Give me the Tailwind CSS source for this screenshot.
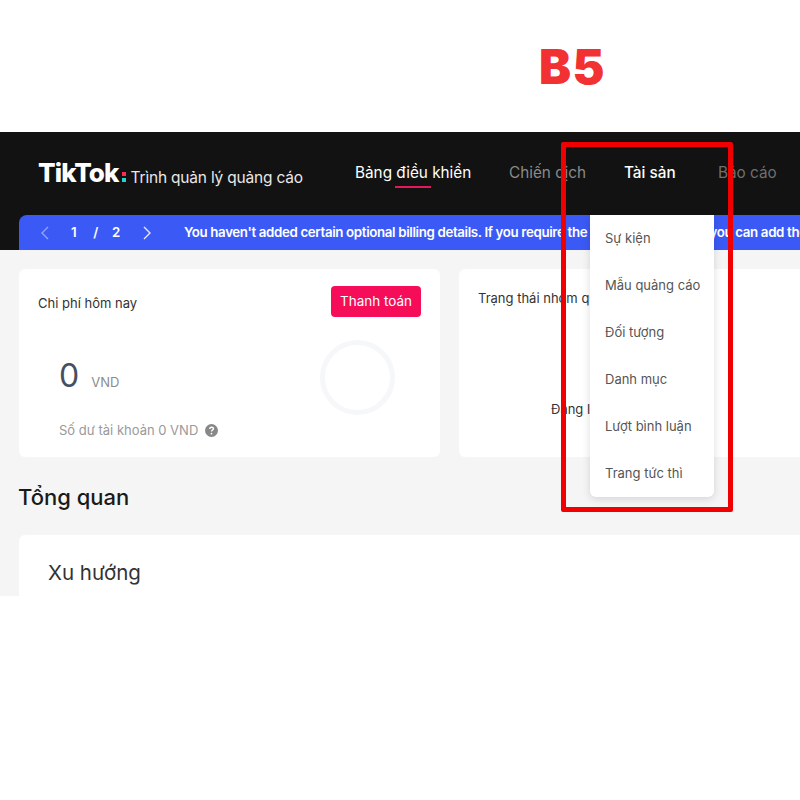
<!DOCTYPE html>
<html lang="vi">
<head>
  <meta charset="UTF-8" />
  <title>B5</title>
  <script src="https://cdn.jsdelivr.net/npm/@tailwindcss/browser@4"></script>
</head>
<body class="bg-white font-['Inter',sans-serif]">
  <div class="relative w-[800px] h-[800px] overflow-hidden">
    <!-- tieu de buoc -->
    <div class="h-[132px] pl-[539px] pt-[38px]">
      <div class="text-[48px] leading-[58px] font-black text-[#f23232] tracking-[1.5px]">B5</div>
    </div>

    <!-- header -->
    <div class="h-[118px] bg-[#121212] overflow-hidden">
      <div class="h-[83px] flex items-center text-[15.3px] pl-[38px]">
        <div class="flex items-baseline w-[317px]">
          <span class="text-[26px] font-extrabold text-white tracking-[-0.9px] -translate-y-px">TikTok</span>
          <span class="flex flex-col gap-[2px] ml-[3px] mr-[5px] -translate-y-[7px]">
            <span class="w-[4px] h-[4px] bg-[#fe2c55]"></span>
            <span class="w-[4px] h-[4px] bg-[#25d4d0]"></span>
          </span>
          <span class="text-[15.5px] text-[#e8e8e8] tracking-[-0.2px]">Trình quản lý quảng cáo</span>
        </div>
        <span class="w-[154px] text-white">Bảng điều khiển</span>
        <span class="w-[115px] text-[#8a8a8a]">Chiến dịch</span>
        <span class="w-[94px] text-white font-medium">Tài sản</span>
        <span class="text-[#6f6f6f]">Báo cáo</span>
      </div>
      <div class="ml-[19px] h-[35px] bg-[#3b5af5] rounded-tl-lg flex items-center text-white text-[13.3px] font-semibold tracking-[-0.35px] whitespace-nowrap">
        <svg class="ml-[21px] w-[10px] h-[14px] shrink-0" viewBox="0 0 10 14" fill="none" stroke="#8fa4fa" stroke-width="1.4"><path d="M8 1 2 7l6 6"/></svg>
        <span class="ml-[21px]">1</span>
        <span class="ml-[17px]">/</span>
        <span class="ml-[14px]">2</span>
        <svg class="ml-[22px] w-[10px] h-[14px] shrink-0" viewBox="0 0 10 14" fill="none" stroke="#e4e9ff" stroke-width="1.4"><path d="m2 1 6 6-6 6"/></svg>
        <span class="ml-[32px]">You haven't added certain optional billing details. If you require the info for the invoice, you can add them</span>
      </div>
    </div>

    <!-- noi dung -->
    <div class="h-[346px] bg-[#f5f5f5] overflow-hidden pt-[19px] pl-[19px]">
      <div class="flex gap-[19px] w-[900px]">
        <div class="relative w-[421px] h-[188px] bg-white rounded-md shrink-0">
          <div class="flex justify-between items-start pl-[19px] pr-[19px] pt-[17px]">
            <span class="text-[13px] text-[#333] mt-[8px]">Chi phí hôm nay</span>
            <button class="w-[90px] h-[31px] rounded bg-[#f50d5a] text-white text-[13.5px]">Thanh toán</button>
          </div>
          <div class="flex items-baseline pl-[40px] mt-[35px]">
            <span class="text-[32px] text-[#454f63]">0</span>
            <span class="ml-[12px] text-[13px] text-[#8c8c8c]">VND</span>
          </div>
          <div class="flex items-center pl-[40px] mt-[21px] text-[13px] text-[#999]">
            Số dư tài khoản 0 VND
            <svg class="ml-[7px] w-[13px] h-[13px]" viewBox="0 0 12 12"><circle cx="6" cy="6" r="6" fill="#888"/><path d="M4.3 4.6C4.4 3.6 5.1 3 6.1 3 7.1 3 7.8 3.6 7.8 4.4 7.8 5.6 6 5.6 6 7" fill="none" stroke="#fff" stroke-width="1.3"/><circle cx="6" cy="8.9" r=".8" fill="#fff"/></svg>
          </div>
          <!-- vong tron bieu do -->
          <div class="absolute left-[301px] top-[71px] w-[75px] h-[75px] rounded-full border-[5px] border-[#f5f7f9]"></div>
        </div>
        <div class="w-[421px] h-[188px] bg-white rounded-md shrink-0">
          <div class="pl-[19px] pt-[20px] text-[13px] text-[#333]">Trạng thái nhóm quảng cáo</div>
          <div class="pl-[92px] mt-[91px] text-[13px] text-[#333]">Đang load</div>
        </div>
      </div>
      <h2 class="mt-[26px] -ml-px text-[22px] leading-[28px] font-medium text-[#1a1a1a]">Tổng quan</h2>
      <div class="mt-[24px] w-[900px] h-[80px] bg-white rounded-t-md pl-[29px] pt-[24px] text-[20.5px] leading-[28px] text-[#333]">Xu hướng</div>
    </div>

    <!-- menu tai san -->
    <div class="absolute left-[590px] top-[215px] w-[124px] h-[282px] bg-white rounded-b-md shadow-[0_2px_8px_rgba(0,0,0,0.14)] z-10 flex flex-col pl-[15px] pt-[12px] gap-[24px] text-[13px] leading-[23px] text-[#555] whitespace-nowrap">
      <span>Sự kiện</span>
      <span>Mẫu quảng cáo</span>
      <span>Đối tượng</span>
      <span>Danh mục</span>
      <span>Lượt bình luận</span>
      <span>Trang tức thì</span>
    </div>

    <!-- khung do danh dau -->
    <div class="absolute left-[561px] top-[142px] w-[172px] h-[370px] border-[5px] border-[#f00000] rounded-[2px] z-20"></div>

    <!-- gach chan tab -->
    <div class="absolute left-[395px] top-[186px] w-[36px] h-[2px] bg-[#e5185e]"></div>
  </div>
</body>
</html>
